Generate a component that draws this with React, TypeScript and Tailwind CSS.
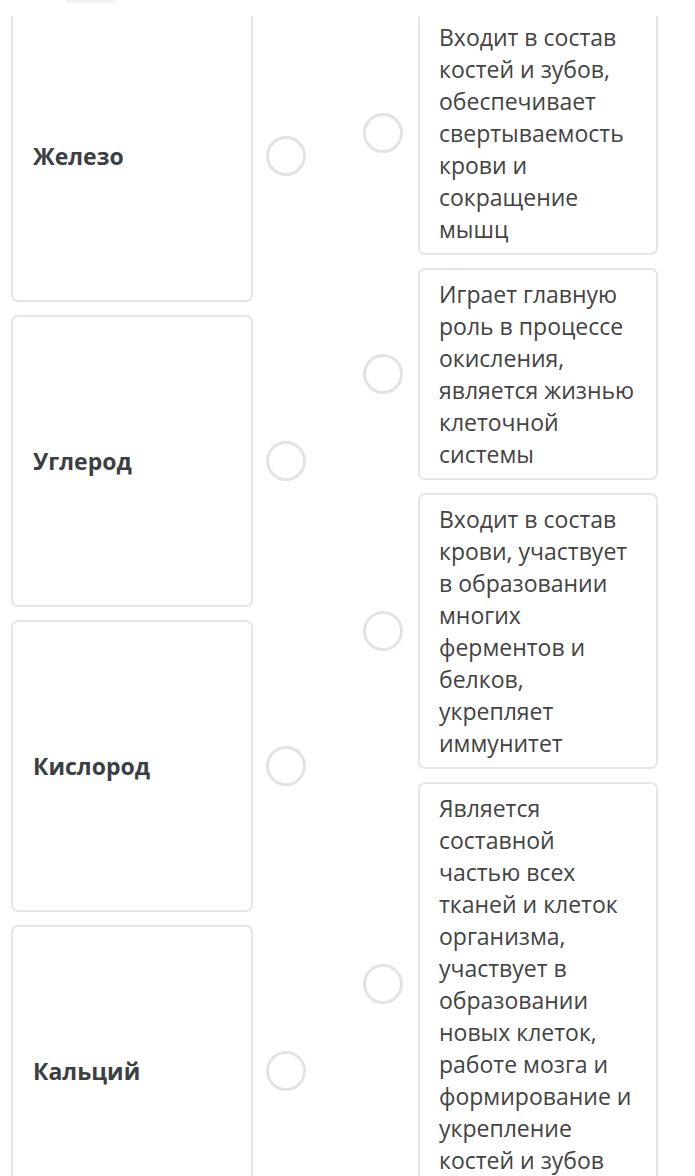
import React from 'react';

const leftItems = ['Железо', 'Углерод', 'Кислород', 'Кальций'];

const rightItems = [
  'Входит в состав костей и зубов, обеспечивает свертываемость крови и сокращение мышц',
  'Играет главную роль в процессе окисления, является жизнью клеточной системы',
  'Входит в состав крови, участвует в образовании многих ферментов и белков, укрепляет иммунитет',
  'Является составной частью всех тканей и клеток организма, участвует в образовании новых клеток, работе мозга и формирование и укрепление костей и зубов',
];

function Radio() {
  return <div className="w-[40px] h-[40px] shrink-0 rounded-full border-[3px] border-[#e3e3e3] bg-white" />;
}

export default function App() {
  return (
    <div
      className="w-[695px] h-[1176px] bg-white overflow-hidden"
      style={{ fontFamily: '"Open Sans", "Noto Sans", sans-serif' }}
    >
      {/* faint header remnant */}
      <div className="h-[16px] relative">
        <div className="absolute left-[66px] top-0 w-[50px] h-[3px] bg-[#f2f2f2] rounded" />
      </div>
      <div className="h-[1160px] overflow-hidden">
        <div className="flex pl-[11px] gap-[57px]">
          {/* left column */}
          <div className="flex flex-col gap-[13px] -mt-[6px]">
            {leftItems.map((name) => (
              <div key={name} className="flex items-center gap-[13px]">
                <div className="w-[242px] h-[292px] border-2 border-[#e5e5e5] rounded-[7px] flex items-center px-[20px]">
                  <span className="text-[23px] font-bold text-[#3b3e43]">{name}</span>
                </div>
                <Radio />
              </div>
            ))}
          </div>
          {/* right column */}
          <div className="flex flex-col gap-[13px] -mt-[5px]">
            {rightItems.map((text, i) => (
              <div key={i} className="flex items-center gap-[15px]">
                <Radio />
                <div className="w-[240px] border-2 border-[#e5e5e5] rounded-[7px] pl-[19px] pr-[17px] py-[8px]">
                  <p className="text-[23px] leading-[32px] text-[#434343]">{text}</p>
                </div>
              </div>
            ))}
          </div>
        </div>
      </div>
    </div>
  );
}
